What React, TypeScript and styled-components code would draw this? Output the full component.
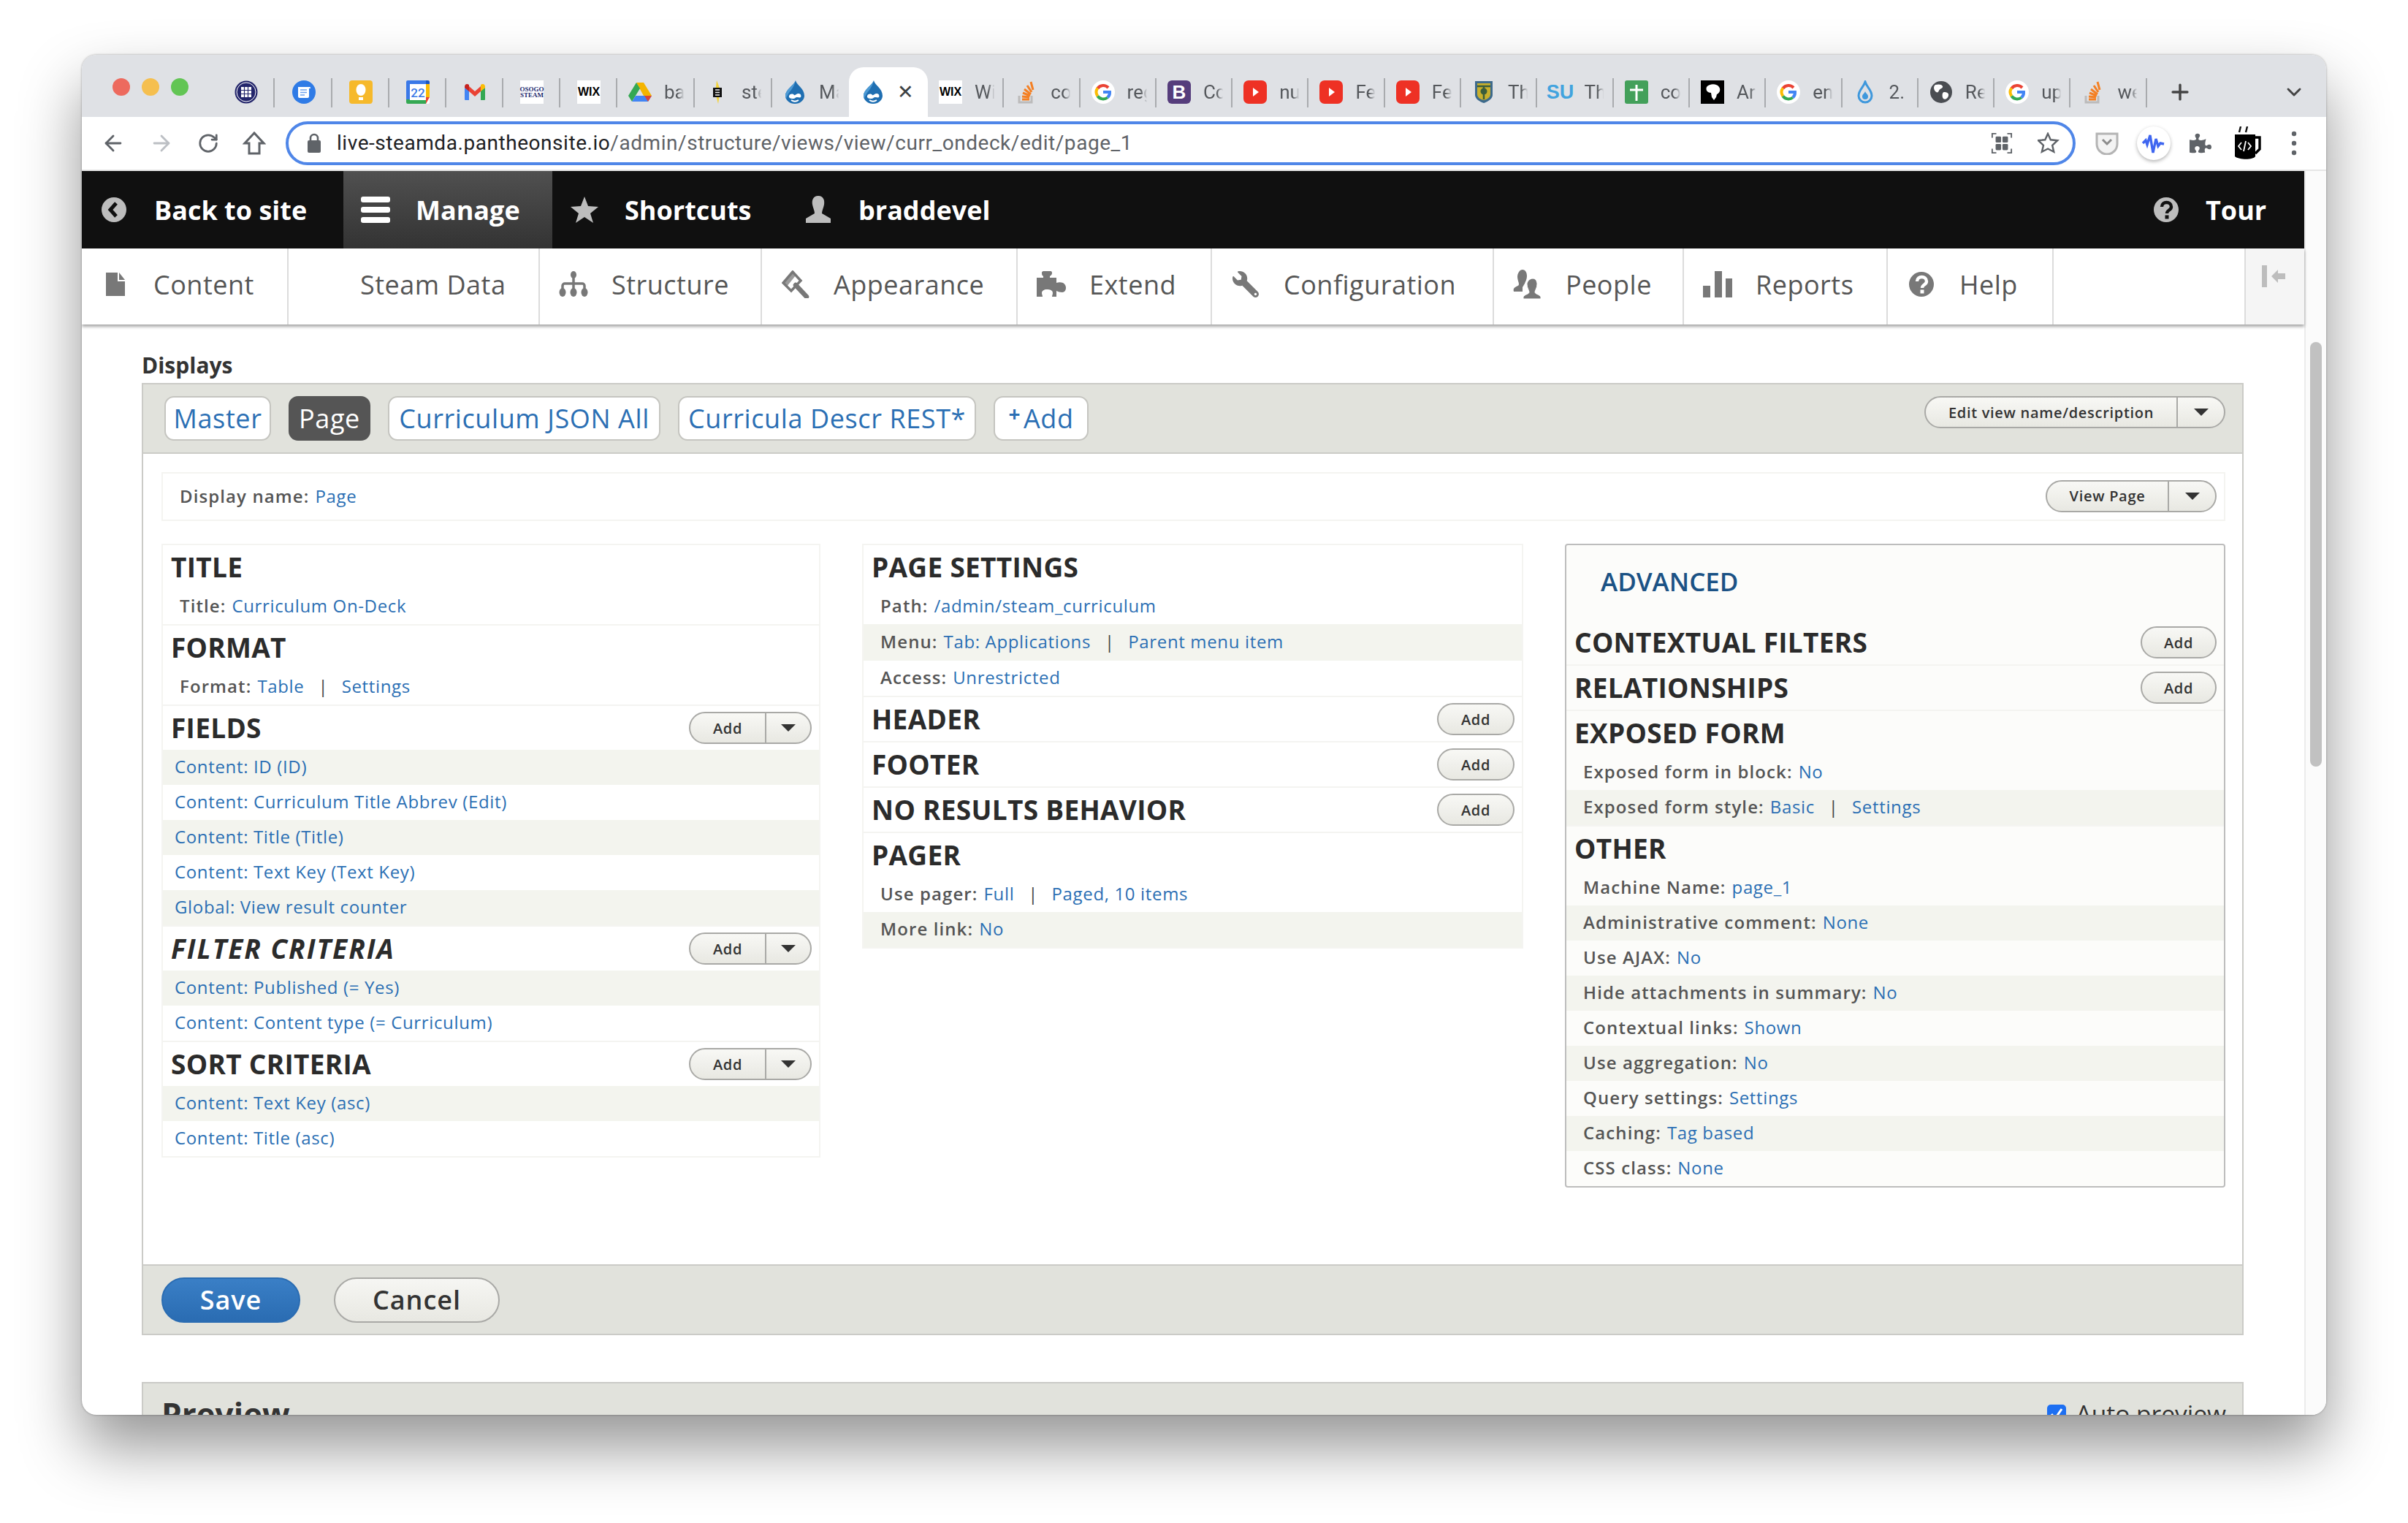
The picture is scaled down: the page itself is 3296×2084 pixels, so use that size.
import React from 'react';
import styled, { createGlobalStyle } from 'styled-components';
import { ArrowLeft, ArrowRight, RotateCw, Plus, ChevronDown } from 'lucide-react';
import { FaPuzzlePiece, FaWrench } from 'react-icons/fa';

const UI = `"Open Sans", "Noto Sans", sans-serif`;

const Global = createGlobalStyle`
  html, body { margin: 0; padding: 0; background: #fff; }
  * { box-sizing: border-box; }
`;

const Stage = styled.div`
  width: 3296px; height: 2084px; padding: 75px 0 0 112px; overflow: hidden; background: #fff;
`;
const Win = styled.div`
  width: 3072px; height: 1861px; border-radius: 20px; overflow: hidden; background: #fff;
  display: flex; flex-direction: column; box-shadow: 0 44px 84px rgba(0,0,0,.42), 0 0 3px rgba(0,0,0,.35);
  font-family: ${UI};
`;
const Strip = styled.div`
  height: 85px; flex: none; background: #dfe1e5; display: flex; align-items: flex-end; position: relative;
`;
const Lights = styled.div`
  width: 186px; height: 85px; flex: none; padding: 32px 0 0 42px; display: flex; gap: 16px; align-items: flex-start;
`;
const Light = styled.span<{ $c: string }>`
  width: 24px; height: 24px; border-radius: 50%; background: ${p => p.$c};
`;
const Tab = styled.div<{ $w: number; $active?: boolean; $pinned?: boolean; $nosep?: boolean }>`
  width: ${p => p.$w}px; height: 68px; flex: none; display: flex; align-items: center; position: relative;
  justify-content: ${p => (p.$pinned ? 'center' : 'flex-start')};
  padding-left: ${p => (p.$pinned ? 0 : p.$active ? 17 : 15)}px; gap: 17px;
  background: ${p => (p.$active ? '#fff' : 'transparent')};
  border-radius: ${p => (p.$active ? '20px 20px 0 0' : '0')};
  &::after {
    content: ''; position: absolute; right: 0; top: 15px; height: 40px; width: 2px;
    background: ${p => (p.$active || p.$nosep ? 'transparent' : '#a9abae')};
  }
`;
const TabText = styled.span`
  font-family: Roboto, sans-serif; font-size: 26px; color: #55585c; width: 38px; white-space: nowrap;
  -webkit-mask-image: linear-gradient(90deg, #000 48%, transparent 72%);
`;
const CloseX = styled.span`
  font-family: Roboto, sans-serif; font-size: 27px; color: #3c4043; line-height: 1;
`;
const StripEnd = styled.div`
  flex: 1; height: 68px; display: flex; align-items: center; justify-content: space-between; padding: 0 28px 0 28px; color: #444;
`;
const Toolbar = styled.div`
  height: 74px; flex: none; background: #fff; border-bottom: 2px solid #e6e6e6; display: flex; align-items: center; padding-bottom: 1px;
`;
const ToolBtns = styled.div`
  width: 279px; flex: none; display: flex; align-items: center; padding-left: 26px; gap: 32px;
`;
const AddrBar = styled.div`
  width: 2450px; height: 60px; flex: none; border: 4px solid #4f86e8; border-radius: 30px; display: flex; align-items: center; padding: 0 18px 0 25px;
`;
const Url = styled.div`
  font-family: Roboto, sans-serif; font-size: 28px; letter-spacing: .55px; color: #202124; margin-left: 21px; flex: 1; white-space: nowrap;
  span { color: #5f6368; }
`;
const AddrIcons = styled.div`
  display: flex; align-items: center; gap: 34px;
`;
const ExtIcons = styled.div`
  flex: 1; display: flex; align-items: center; padding-left: 11px;
`;
const ExtCell = styled.div`
  width: 64px; flex: none; display: flex; align-items: center; justify-content: center;
`;
const ExtCircle = styled.div`
  width: 46px; height: 46px; border-radius: 50%; background: #fff; box-shadow: 0 2px 5px rgba(0,0,0,.3); display: flex; align-items: center; justify-content: center;
`;

const Below = styled.div`
  flex: 1; display: flex; min-height: 0;
`;
const Main = styled.div`
  width: 3042px; flex: none; display: flex; flex-direction: column; min-height: 0;
`;
const Track = styled.div`
  flex: 1; background: #fbfbfb; border-left: 2px solid #ececec; padding: 234px 5px 0 6px;
`;
const Thumb = styled.div`
  width: 16px; height: 581px; border-radius: 8px; background: #c1c1c1;
`;
const TopBar = styled.div`
  height: 106px; flex: none; background: #101010; display: flex; align-items: stretch;
`;
const TopItem = styled.div<{ $w?: number; $on?: boolean }>`
  width: ${p => (p.$w ? p.$w + 'px' : 'auto')}; flex: none; display: flex; align-items: center; padding-left: 25px; gap: 36px;
  color: #fff; font-weight: 700; font-size: 36px;
  background: ${p => (p.$on ? 'linear-gradient(#505050, #333)' : 'transparent')};
`;
const TourItem = styled(TopItem)`
  padding-left: 0; gap: 36px;
`;
const TopGap = styled.div`
  flex: 1;
`;
const IconBox = styled.span<{ $w?: number }>`
  width: ${p => p.$w ?? 38}px; flex: none; display: flex; align-items: center; justify-content: center;
`;
const Nav = styled.div`
  height: 104px; flex: none; display: flex; background: #fff; position: relative; z-index: 2;
  box-shadow: 0 3px 4px rgba(0,0,0,.35);
`;
const NavItem = styled.div<{ $w: number }>`
  width: ${p => p.$w}px; flex: none; display: flex; align-items: center; padding: 0 0 6px 27px; gap: 33px;
  border-right: 2px solid #dcdcdc; color: #565656; font-size: 36px; letter-spacing: .5px; white-space: nowrap;
`;
const NavFill = styled.div`
  flex: 1; border-right: 2px solid #dcdcdc;
`;
const NavToggle = styled.div`
  width: 80px; flex: none; background: #f5f5f5; padding: 23px 0 0 22px;
`;
const Content = styled.div`
  flex: 1; min-height: 0; overflow: hidden; padding: 0 83px 0 82px;
`;
const Label = styled.div`
  height: 80px; padding-top: 36px; line-height: 40px; font-size: 30px; font-weight: 700; color: #333;
`;
const PanelHead = styled.div`
  height: 97px; background: #e1e2dc; border: 2px solid #cbcbc7; display: flex; align-items: flex-start; padding: 16px 23px 0 29px; gap: 24px;
`;
const DTab = styled.div<{ $on?: boolean; $w: number }>`
  height: 61px; width: ${p => p.$w}px; flex: none; border-radius: 13px; display: flex; align-items: center; justify-content: center;
  background: ${p => (p.$on ? '#555' : '#fff')}; color: ${p => (p.$on ? '#fff' : '#2b6fb4')};
  border: 2px solid ${p => (p.$on ? '#555' : '#c5c5c0')}; font-size: 36px; letter-spacing: .6px; white-space: nowrap;
`;
const PlusMark = styled.span`
  font-size: 28px; font-weight: 700; position: relative; top: -7px; margin-right: 4px;
`;
const Spacer = styled.div`
  flex: 1;
`;
const Btn = styled.div<{ $w: number }>`
  width: ${p => p.$w}px; height: 44px; flex: none; border-radius: 22px; border: 2px solid #a9a9a6;
  background: linear-gradient(#f8f8f5, #e8e8e2); display: flex; align-items: center; color: #333;
  font-size: 20px; font-weight: 600; letter-spacing: .7px; white-space: nowrap;
`;
const BtnLabel = styled.span`
  flex: 1; text-align: center;
`;
const BtnCaret = styled.span<{ $w: number }>`
  width: ${p => p.$w}px; align-self: stretch; flex: none; border-left: 2px solid #a9a9a6; display: flex; align-items: center; justify-content: center;
  &::after { content: ''; border-left: 10px solid transparent; border-right: 10px solid transparent; border-top: 10px solid #333; }
`;
const PanelBody = styled.div`
  height: 1109px; border: solid #cbcbc7; border-width: 0 2px; padding: 25px 23px 0 25px;
`;
const NameBox = styled.div`
  height: 67px; border: 2px solid #f4f4f1; display: flex; align-items: center; padding: 0 10px 2px 23px; font-size: 24px;
`;
const Columns = styled.div`
  margin-top: 31px; display: grid; grid-template-columns: 902px 905px 904px; column-gap: 57px; align-items: start;
`;
const Col = styled.div<{ $adv?: boolean }>`
  border: 2px solid ${p => (p.$adv ? '#bdbdbd' : '#f4f4f1')}; border-radius: ${p => (p.$adv ? '4px' : '0')};
  background: ${p => (p.$adv ? '#fcfcfa' : '#fff')};
`;
const Adv = styled.div`
  height: 103px; padding: 0 0 4px 47px; display: flex; align-items: center; font-size: 35px; font-weight: 600; color: #1b5285;
`;
const Section = styled.div<{ $last?: boolean }>`
  border-bottom: ${p => (p.$last ? '0' : '2px solid #f4f4f1')};
`;
const Head = styled.div`
  height: 60px; display: flex; align-items: center; justify-content: space-between; padding: 0 10px 0 11px;
`;
const H = styled.h3<{ $it?: boolean }>`
  margin: 0 0 2px; font-size: 37px; font-weight: 700; color: #2b2b2b;
  font-style: ${p => (p.$it ? 'italic' : 'normal')}; letter-spacing: ${p => (p.$it ? 2 : 0.3)}px;
`;
const Row = styled.div<{ $odd?: boolean; $link?: boolean; $tall?: boolean }>`
  height: ${p => (p.$tall ? 50 : 48)}px; display: flex; align-items: center; padding: 0 0 3px ${p => (p.$link ? 16 : 23)}px;
  background: ${p => (p.$odd ? '#f3f4ee' : 'transparent')}; font-size: 24px; white-space: pre;
`;
const B = styled.span`
  font-weight: 600; color: #555; margin-right: 8px; letter-spacing: 1.1px;
`;
const A = styled.span`
  color: #2b6fb4; letter-spacing: .65px;
`;
const Pipe = styled.span`
  color: #444; margin: 0 19px;
`;
const Footer = styled.div`
  height: 97px; background: #e1e2dc; border: 2px solid #cbcbc7; display: flex; align-items: center; padding: 0 0 0 25px; gap: 46px;
`;
const BigBtn = styled.div<{ $w: number; $p?: boolean }>`
  width: ${p => p.$w}px; height: 62px; border-radius: 31px; display: flex; align-items: center; justify-content: center;
  font-size: 36px; font-weight: 600; letter-spacing: 1px;
  color: ${p => (p.$p ? '#fff' : '#333')};
  background: ${p => (p.$p ? 'linear-gradient(#3a7fc6, #2a6cb2)' : 'linear-gradient(#f6f6f3, #e8e8e2)')};
  border: 2px solid ${p => (p.$p ? '#2a6cb2' : '#a9a9a6')};
`;
const Preview = styled.div`
  margin-top: 64px; height: 120px; background: #e1e2dc; border: 2px solid #cbcbc7; display: flex; justify-content: space-between; padding: 12px 22px 0 25px;
`;
const PTitle = styled.div`
  font-size: 44px; font-weight: 700; color: #333; line-height: 60px;
`;
const PAuto = styled.div`
  display: flex; gap: 14px; font-size: 33.5px; color: #333; line-height: 58px; align-items: flex-start;
`;
const Check = styled.span`
  width: 26px; height: 26px; margin-top: 17px; border-radius: 5px; background: #1d6ff2; color: #fff; display: flex; align-items: center; justify-content: center;
`;

/* favicons */
const Tile = styled.span<{ $bg: string; $c?: string; $fs?: number; $r?: number; $b?: boolean }>`
  width: 32px; height: 32px; flex: none; background: ${p => p.$bg}; color: ${p => p.$c ?? '#000'}; font-size: ${p => p.$fs ?? 14}px;
  border-radius: ${p => p.$r ?? 0}px; font-weight: ${p => (p.$b ? 700 : 400)};
  display: flex; align-items: center; justify-content: center; font-family: "Liberation Sans", sans-serif; line-height: 1;
`;
const Steam = styled(Tile)`
  flex-direction: column; font-family: "Liberation Serif", serif; font-weight: 700; line-height: .9;
`;
const S = (p: React.PropsWithChildren<{ w?: number; h?: number; v?: string; fill?: string }>) => (
  <svg width={p.w ?? 32} height={p.h ?? 32} viewBox={p.v ?? '0 0 32 32'} fill={p.fill ?? 'none'} style={{ flex: 'none', display: 'block' }}>{p.children}</svg>
);
const Drop = () => (
  <S>
    <path d="M17 0c1 6 12 11 12 21a13 11 0 0 1-26 0C3 12 15 7 17 0z" fill="#1f6fb2" />
    <path d="M17 0C15 7 3 12 3 21c0 2 .5 3 1 4 3-10 10-12 13-25z" fill="#4d9ad4" />
    <path d="M8 21c2-3 5-3 7-1 2 1 3-2 6-2 3 0 4 3 3 5-1 1-3 0-5 0s-3 2-5 2-7 0-6-4z" fill="#fff" />
    <path d="M11 27c3 2 7 2 10 0" stroke="#fff" strokeWidth="2" />
  </S>
);
const GG = () => (
  <S>
    <circle cx="16" cy="16" r="16" fill="#fff" />
    <path d="M23 10a9.500 9.500 0 0 0-14.600 1" stroke="#ea4335" strokeWidth="4" />
    <path d="M8.400 10.500a9.500 9.500 0 0 0 0 11" stroke="#fbbc05" strokeWidth="4" />
    <path d="M8.400 21.500a9.500 9.500 0 0 0 13.500 2" stroke="#34a853" strokeWidth="4" />
    <path d="M16 16h9a9.500 9.500 0 0 1-3 7.500" stroke="#4285f4" strokeWidth="4" />
  </S>
);
const YT = () => (
  <S><rect width="32" height="32" y="0" rx="7" fill="#ee3124" /><path d="M13 10l8 6-8 6z" fill="#fff" /></S>
);
const SO = () => (
  <S>
    <path d="M6 21v9h17v-9" stroke="#bcbbbb" strokeWidth="3" />
    <path d="M10 26h10M10 22l10 1M11 17l10 4M13 12l9 7M17 7l6 9M22 2l3 11" stroke="#f48024" strokeWidth="3" />
  </S>
);
const fav: Record<string, React.ReactNode> = {
  grid: (
    <S>
      <circle cx="16" cy="16" r="15.500" fill="#23256b" />
      <circle cx="16" cy="16" r="13" fill="none" stroke="#fff" strokeWidth="1" />
      <path d="M9 9h14v14H9z" fill="#fff" />
      <path d="M13.500 9v14M18.500 9v14M9 13.500h14M9 18.500h14" stroke="#23256b" strokeWidth="1.200" />
    </S>
  ),
  docs: (
    <S>
      <circle cx="16" cy="16" r="16" fill="#2f7be6" />
      <path d="M8 9h16c1 0 1 1 1 2h-2v11a2 2 0 0 1-2 2H10a2 2 0 0 1-2-2z" fill="#fff" />
      <path d="M11 13h9M11 16.500h9M11 20h6" stroke="#6ea2ee" strokeWidth="1.700" />
    </S>
  ),
  keep: (
    <S>
      <rect width="32" height="32" rx="4" fill="#f6b92b" />
      <ellipse cx="16" cy="13" rx="6.500" ry="8" fill="#fff" />
      <rect x="13" y="23" width="6" height="4" fill="#fff" />
    </S>
  ),
  cal: (
    <S>
      <rect width="32" height="32" rx="2" fill="#fff" />
      <path d="M0 2a2 2 0 0 1 2-2h25v5H5v21H0z" fill="#3a78e7" />
      <path d="M27 0h3a2 2 0 0 1 2 2v3h-5z" fill="#1a56c4" />
      <path d="M27 5h5v18h-5z" fill="#fbbc05" />
      <path d="M5 27h22v5H2a2 2 0 0 1-2-2v-4h5z" fill="#34a853" />
      <path d="M27 23h5l-5 9z" fill="#ea4335" />
      <text x="16" y="23" textAnchor="middle" fontSize="17" fontFamily="Roboto" fill="#3a78e7" fontWeight="500">22</text>
    </S>
  ),
  gmail: (
    <S>
      <path d="M2 10v16a1 1 0 0 0 1 1h5V14z" fill="#4285f4" />
      <path d="M24 14v13h5a1 1 0 0 0 1-1V10z" fill="#34a853" />
      <path d="M8 8l8 7 8-7v7l-8 7-8-7z" fill="#ea4335" />
      <path d="M2 9c0-4 3-5 6-3v9l-6-5z" fill="#c5221f" />
      <path d="M24 6c3-2 6-1 6 3v1l-6 5z" fill="#fbbc05" />
    </S>
  ),
  steam: (
    <Steam $bg="#fff" $c="#1c2a6e" $fs={9}>
      <span>OSOGO</span>
      <span>STEAM</span>
    </Steam>
  ),
  wix: <Tile $bg="#fff" $fs={16} $b>WIX</Tile>,
  drive: (
    <S>
      <path d="M11 3h10l11 18H21z" fill="#f4b400" />
      <path d="M11 3L0 21l5 8L16 11z" fill="#34a853" />
      <path d="M5 29h22l5-8H10z" fill="#4285f4" />
      <path d="M27 29l5-8H22z" fill="#db4437" />
    </S>
  ),
  bolt: (
    <S>
      <path d="M15 0l5 13-3 19-4-15z" fill="#f3d33a" />
      <rect x="10" y="10" width="12" height="13" fill="#111" />
      <path d="M13 13h6M13 16.500h6M13 20h6" stroke="#eee" strokeWidth="1.400" />
    </S>
  ),
  drop: <Drop />,
  so: <SO />,
  g: <GG />,
  bs: <Tile $bg="#563d7c" $c="#fff" $fs={26} $r={6} $b>B</Tile>,
  yt: <YT />,
  shield: (
    <S>
      <path d="M4 1h24v19c0 5-6 9-12 11C10 29 4 25 4 20z" fill="#3d6a8c" />
      <path d="M7 4h18v15c0 4-4 7-9 8-5-1-9-4-9-8z" fill="#c9b02c" />
      <path d="M7 8h18M16 8v18" stroke="#3b5d3b" strokeWidth="2.500" />
      <circle cx="16" cy="15" r="4.500" fill="#3b5d3b" />
    </S>
  ),
  su: <Tile $bg="transparent" $c="#42a3de" $fs={27} $b>SU</Tile>,
  cross: (
    <S>
      <rect width="32" height="32" rx="3" fill="#43a05a" />
      <path d="M16 6v22M7 13h18" stroke="#fff" strokeWidth="3" />
    </S>
  ),
  blob: (
    <S>
      <rect width="32" height="32" fill="#000" />
      <path d="M8 9c4-5 14-5 17 0 3 4 0 9-3 10l-1 4-3 4-3-4-1-6c-4 0-8-3-6-8z" fill="#fff" />
    </S>
  ),
  outline: (
    <S>
      <path d="M16 2c2 7 9 11 9 19a9 9 0 0 1-18 0C7 13 14 9 16 2z" stroke="#3f98dc" strokeWidth="3" />
      <path d="M16 15c1 3 4 4 4 7a4 4 0 0 1-8 0c0-3 3-4 4-7z" fill="#3f98dc" />
    </S>
  ),
  globe: (
    <S>
      <circle cx="16" cy="16" r="15" fill="#4a4d52" />
      <path d="M8 6c4-1 9-1 10 2s-4 3-5 6-3 3-5 1-3-7 0-9zM20 16c3 0 7 1 6 5s-5 6-7 4-2-9 1-9z" fill="#fff" />
    </S>
  ),
};

type T = { f: string; t?: string; w: number };
const PIN = 78;
const R = 104.3;
const tabs: T[] = [
  { f: 'grid', w: PIN }, { f: 'docs', w: PIN + 1 }, { f: 'keep', w: PIN }, { f: 'cal', w: PIN }, { f: 'gmail', w: PIN },
  { f: 'steam', w: PIN }, { f: 'wix', w: PIN }, { f: 'drive', t: 'ba', w: 106 }, { f: 'bolt', t: 'ste', w: 106 },
  { f: 'drop', t: 'Ma', w: 105 },
];
const tabs2: T[] = [
  { f: 'wix', t: 'Wi', w: R }, { f: 'so', t: 'co', w: R }, { f: 'g', t: 'reg', w: R }, { f: 'bs', t: 'Cc', w: R },
  { f: 'yt', t: 'nu', w: R }, { f: 'yt', t: 'Fe', w: R }, { f: 'yt', t: 'Fe', w: R }, { f: 'shield', t: 'Th', w: R },
  { f: 'su', t: 'Th', w: R }, { f: 'cross', t: 'co', w: R }, { f: 'blob', t: 'Ar', w: R }, { f: 'g', t: 'en', w: R },
  { f: 'outline', t: '2.', w: R }, { f: 'globe', t: 'Re', w: R }, { f: 'g', t: 'up', w: R }, { f: 'so', t: 'we', w: R },
];

const Dark = '#787878';
const Light2 = '#bdbdbd';
const Circle = ({ c, glyph }: { c: string; glyph: 'back' | 'q' }) => (
  <S w={36} h={36} v="0 0 36 36">
    <circle cx="18" cy="18" r="17" fill={c} />
    {glyph === 'back' ? (
      <path d="M21 9l-8 9 8 9" stroke="#101010" strokeWidth="5" fill="none" />
    ) : (
      <>
        <path d="M12 14c0-8 13-8 13 0 0 5-6 4-6 9" stroke={c === Dark ? '#fff' : '#111'} strokeWidth="4.400" fill="none" />
        <rect x="16.500" y="25.500" width="5" height="5" fill={c === Dark ? '#fff' : '#111'} />
      </>
    )}
  </S>
);
const icons: Record<string, React.ReactNode> = {
  content: <S w={26} h={32} v="0 0 26 32"><path d="M0 0h16v12h10v20H0zM18 0l8 10h-8z" fill={Dark} /></S>,
  tree: (
    <S w={40} h={36} v="0 0 40 36">
      <ellipse cx="20" cy="5" rx="4" ry="5" fill={Dark} />
      <path d="M20 5v20M5 25v-5a3 3 0 0 1 3-3h24a3 3 0 0 1 3 3v5" stroke={Dark} strokeWidth="3.500" />
      <ellipse cx="5" cy="29" rx="4.500" ry="6" fill={Dark} />
      <ellipse cx="20" cy="29" rx="4.500" ry="6" fill={Dark} />
      <ellipse cx="35" cy="29" rx="4.500" ry="6" fill={Dark} />
    </S>
  ),
  hammer: (
    <S w={38} h={38} v="0 0 38 38">
      <path d="M15 2L2 17l11 11 13-14z" fill="#fff" stroke={Dark} strokeWidth="3.500" />
      <path d="M15 2L2 17l5 5L19 7z" fill={Dark} opacity=".75" />
      <path d="M19 20l15 16" stroke={Dark} strokeWidth="6.500" strokeLinecap="round" />
    </S>
  ),
  puzzle: (
    <S w={40} h={36} v="0 0 40 36">
      <path d="M0 9H9V7C7 6 7 4 7 2 7 1 8 0 9 0H19C21 0 21 2 21 3 21 5 19 6 18 7V9H27V16C30 15 33 15 36 16 39 18 40 20 40 23 40 26 38 29 35 29 32 29 29 28 27 27V35H21C21 33 22 32 22 30 22 26 18 25 14 25 10 25 7 27 7 30 7 32 8 33 8 35H0Z" fill={Dark} />
    </S>
  ),
  wrench: <FaWrench size={36} color={Dark} style={{ transform: 'scaleX(-1)' }} />,
  people: (
    <S w={40} h={40} v="0 0 40 40">
      <path d="M13 0c4 0 6 4 6 9 0 4-2 7-3 10l-3 5v6H1c-1-3 0-5 2-6 3-2 5-2 5-4 0-3-2-6-2-10 0-5 3-10 7-10z" fill={Dark} />
      <path d="M27 12c4 0 6 4 6 8 0 5-3 8-3 11 0 2 6 3 8 6v3H14v-3c2-3 8-4 8-6 0-3-3-6-3-11 0-4 4-8 8-8z" fill={Dark} stroke="#fff" strokeWidth="1" />
    </S>
  ),
  bars: <S w={40} h={36} v="0 0 40 36"><path d="M0 20h10v16H0zM16 0h10v36H16zM31 10h9v26h-9z" fill={Dark} /></S>,
  help: <Circle c={Dark} glyph="q" />,
};

const nav: { t: string; i?: string; w: number }[] = [
  { t: 'Content', i: 'content', w: 283 }, { t: 'Steam Data', w: 344 }, { t: 'Structure', i: 'tree', w: 304 },
  { t: 'Appearance', i: 'hammer', w: 350 }, { t: 'Extend', i: 'puzzle', w: 266 }, { t: 'Configuration', i: 'wrench', w: 386 },
  { t: 'People', i: 'people', w: 260 }, { t: 'Reports', i: 'bars', w: 279 }, { t: 'Help', i: 'help', w: 227 },
];

type Item = { l?: string; v?: string; v2?: string; link?: string };
const AddOnly = ({ w = 106 }: { w?: number }) => <Btn $w={w}><BtnLabel>Add</BtnLabel></Btn>;
const AddDrop = () => <Btn $w={168}><BtnLabel>Add</BtnLabel><BtnCaret $w={62} /></Btn>;

const Rows = ({ items, first = false, tallAt }: { items: Item[]; first?: boolean; tallAt?: number }) => (
  <>
    {items.map((it, i) => (
      <Row key={i} $odd={first ? i % 2 === 0 : i % 2 === 1} $link={!!it.link} $tall={tallAt === i}>
        {it.link ? <A>{it.link}</A> : (
          <>
            <B>{it.l}:</B><A>{it.v}</A>
            {it.v2 && <><Pipe>|</Pipe><A>{it.v2}</A></>}
          </>
        )}
      </Row>
    ))}
  </>
);

export default function App() {
  return (
    <Stage>
      <Global />
      <Win>
        <Strip>
          <Lights>
            <Light $c="#ed6a5e" /><Light $c="#f5bf4f" /><Light $c="#62c554" />
          </Lights>
          {tabs.map((t, i) => (
            <Tab key={i} $w={t.w} $pinned={!t.t} $nosep={i === tabs.length - 1}>
              {fav[t.f]}
              {t.t && <TabText>{t.t}</TabText>}
            </Tab>
          ))}
          <Tab $w={108} $active>
            {fav.drop}
            <CloseX>✕</CloseX>
          </Tab>
          {tabs2.map((t, i) => (
            <Tab key={i} $w={t.w}>
              {fav[t.f]}
              <TabText>{t.t}</TabText>
            </Tab>
          ))}
          <StripEnd>
            <Plus size={34} strokeWidth={2.4} />
            <ChevronDown size={32} strokeWidth={2.2} />
          </StripEnd>
        </Strip>
        <Toolbar>
          <ToolBtns>
            <ArrowLeft size={34} color="#5f6368" strokeWidth={2} />
            <ArrowRight size={34} color="#bcbfc4" strokeWidth={2} />
            <RotateCw size={30} color="#5f6368" strokeWidth={2.2} />
            <S w={32} h={34} v="0 0 32 34"><path d="M16 3L3 17h6v14h14V17h6z" fill="none" stroke="#5f6368" strokeWidth="3" /></S>
          </ToolBtns>
          <AddrBar>
            <S w={20} h={30} v="0 0 20 30"><path d="M5 12V8a5 5 0 0 1 10 0v4" stroke="#5f6368" strokeWidth="2.600" /><rect x="1" y="11" width="18" height="17" rx="2" fill="#5f6368" /></S>
            <Url>live-steamda.pantheonsite.io<span>/admin/structure/views/view/curr_ondeck/edit/page_1</span></Url>
            <AddrIcons>
              <S w={30} h={30}>
                <path d="M2 8V2h6M24 2h6v6M30 24v6h-6M8 30H2v-6" stroke="#5f6368" strokeWidth="2" />
                <rect x="7" y="6" width="8" height="9" rx="1.500" fill="#5f6368" /><rect x="17" y="6" width="8" height="9" rx="1.500" fill="#5f6368" />
                <rect x="7" y="17" width="8" height="9" rx="1.500" fill="#5f6368" /><rect x="17" y="17" width="8" height="9" rx="1.500" fill="#5f6368" />
              </S>
              <S w={30} h={30}><path d="M15 2l4 9 10 1-7.500 7 2.200 9.500L15 24l-8.700 4.500L8.500 19 1 12l10-1z" stroke="#5f6368" strokeWidth="2.600" /></S>
            </AddrIcons>
          </AddrBar>
          <ExtIcons>
            <ExtCell><S w={32} h={32}><path d="M2 3h28v14a14 14 0 0 1-28 0z" fill="#f3f3f3" stroke="#b4b4b4" strokeWidth="3" /><path d="M10 11l6 6 6-6" stroke="#8c8c8c" strokeWidth="3" /></S></ExtCell>
            <ExtCell>
              <ExtCircle>
                <S w={34} h={30} v="0 0 34 30"><path d="M2 15l4-4 2 6 4-13 4 24 4-19 3 10 3-4 5 1" stroke="#3f66f0" strokeWidth="3.400" /></S>
              </ExtCircle>
            </ExtCell>
            <ExtCell><FaPuzzlePiece size={30} color="#5f6368" /></ExtCell>
            <ExtCell>
              <S w={38} h={46} v="0 0 38 46">
                <path d="M10 0l-2 8M19 0l-2 8" stroke="#111" strokeWidth="2.400" />
                <path d="M2 11h28v30c-3 5-22 5-28 0z" fill="#000" />
                <path d="M30 15h6v16l-6 6" stroke="#000" strokeWidth="3.400" />
                <path d="M11 22l-4 5 4 5M20 22l4 5-4 5M17 20l-3 14" stroke="#fff" strokeWidth="1.800" />
              </S>
            </ExtCell>
            <ExtCell>
              <S w={10} h={34} v="0 0 10 34"><circle cx="5" cy="4" r="3.200" fill="#5f6368" /><circle cx="5" cy="17" r="3.200" fill="#5f6368" /><circle cx="5" cy="30" r="3.200" fill="#5f6368" /></S>
            </ExtCell>
          </ExtIcons>
        </Toolbar>
        <Below>
          <Main>
            <TopBar>
              <TopItem $w={358}>
                <IconBox><Circle c={Light2} glyph="back" /></IconBox>
                <span>Back to site</span>
              </TopItem>
              <TopItem $w={286} $on>
                <IconBox>
                  <S w={40} h={36} v="0 0 40 36"><rect width="40" height="8" y="0" rx="3" fill="#fff" /><rect width="40" height="8" y="14" rx="3" fill="#fff" /><rect width="40" height="8" y="28" rx="3" fill="#fff" /></S>
                </IconBox>
                <span>Manage</span>
              </TopItem>
              <TopItem $w={320}>
                <IconBox>
                  <S w={38} h={36} v="0 0 38 36"><path d="M19 0l5 13 14 1-11 9 4 13-12-8-12 8 4-13L0 14l14-1z" fill={Light2} /></S>
                </IconBox>
                <span>Shortcuts</span>
              </TopItem>
              <TopItem>
                <IconBox>
                  <S w={38} h={38} v="0 0 38 38"><path d="M19 0c7 0 9 6 8 12-1 5-3 8-3 12l12 7v6H2v-6l12-7c0-4-2-7-3-12-1-6 1-12 8-12z" fill={Light2} /></S>
                </IconBox>
                <span>braddevel</span>
              </TopItem>
              <TopGap />
              <TourItem $w={207}>
                <IconBox $w={36}><Circle c={Light2} glyph="q" /></IconBox>
                <span>Tour</span>
              </TourItem>
            </TopBar>
            <Nav>
              {nav.map(n => (
                <NavItem key={n.t} $w={n.w}>
                  <IconBox>{n.i && icons[n.i]}</IconBox>
                  <span>{n.t}</span>
                </NavItem>
              ))}
              <NavFill />
              <NavToggle>
                <S w={38} h={30} v="0 0 38 30"><rect x="0" y="0" width="7" height="30" fill="#bdbdbd" /><path d="M13 15l9-9v5h10v8H22v5z" fill="#bdbdbd" /></S>
              </NavToggle>
            </Nav>
            <Content>
              <Label>Displays</Label>
              <PanelHead>
                <DTab $w={146}><A>Master</A></DTab>
                <DTab $w={112} $on>Page</DTab>
                <DTab $w={373}>Curriculum JSON All</DTab>
                <DTab $w={408}>Curricula Descr REST*</DTab>
                <DTab $w={130}><PlusMark>+</PlusMark>Add</DTab>
                <Spacer />
                <Btn $w={412}><BtnLabel>Edit view name/description</BtnLabel><BtnCaret $w={65} /></Btn>
              </PanelHead>
              <PanelBody>
                <NameBox>
                  <B>Display name:</B><A>Page</A>
                  <Spacer />
                  <Btn $w={234}><BtnLabel>View Page</BtnLabel><BtnCaret $w={65} /></Btn>
                </NameBox>
                <Columns>
                  <Col>
                    <Section>
                      <Head><H>TITLE</H></Head>
                      <Rows items={[{ l: 'Title', v: 'Curriculum On-Deck' }]} />
                    </Section>
                    <Section>
                      <Head><H>FORMAT</H></Head>
                      <Rows items={[{ l: 'Format', v: 'Table', v2: 'Settings' }]} />
                    </Section>
                    <Section>
                      <Head><H>FIELDS</H><AddDrop /></Head>
                      <Rows first items={[
                        { link: 'Content: ID (ID)' }, { link: 'Content: Curriculum Title Abbrev (Edit)' }, { link: 'Content: Title (Title)' },
                        { link: 'Content: Text Key (Text Key)' }, { link: 'Global: View result counter' },
                      ]} />
                    </Section>
                    <Section>
                      <Head><H $it>FILTER CRITERIA</H><AddDrop /></Head>
                      <Rows first items={[{ link: 'Content: Published (= Yes)' }, { link: 'Content: Content type (= Curriculum)' }]} />
                    </Section>
                    <Section $last>
                      <Head><H>SORT CRITERIA</H><AddDrop /></Head>
                      <Rows first items={[{ link: 'Content: Text Key (asc)' }, { link: 'Content: Title (asc)' }]} />
                    </Section>
                  </Col>
                  <Col>
                    <Section>
                      <Head><H>PAGE SETTINGS</H></Head>
                      <Rows tallAt={1} items={[
                        { l: 'Path', v: '/admin/steam_curriculum' },
                        { l: 'Menu', v: 'Tab: Applications', v2: 'Parent menu item' },
                        { l: 'Access', v: 'Unrestricted' },
                      ]} />
                    </Section>
                    <Section><Head><H>HEADER</H><AddOnly /></Head></Section>
                    <Section><Head><H>FOOTER</H><AddOnly /></Head></Section>
                    <Section><Head><H>NO RESULTS BEHAVIOR</H><AddOnly /></Head></Section>
                    <Section $last>
                      <Head><H>PAGER</H></Head>
                      <Rows items={[{ l: 'Use pager', v: 'Full', v2: 'Paged, 10 items' }, { l: 'More link', v: 'No' }]} />
                    </Section>
                  </Col>
                  <Col $adv>
                    <Adv>ADVANCED</Adv>
                    <Section><Head><H>CONTEXTUAL FILTERS</H><AddOnly w={104} /></Head></Section>
                    <Section><Head><H>RELATIONSHIPS</H><AddOnly w={104} /></Head></Section>
                    <Section>
                      <Head><H>EXPOSED FORM</H></Head>
                      <Rows items={[{ l: 'Exposed form in block', v: 'No' }, { l: 'Exposed form style', v: 'Basic', v2: 'Settings' }]} />
                    </Section>
                    <Section $last>
                      <Head><H>OTHER</H></Head>
                      <Rows items={[
                        { l: 'Machine Name', v: 'page_1' }, { l: 'Administrative comment', v: 'None' }, { l: 'Use AJAX', v: 'No' },
                        { l: 'Hide attachments in summary', v: 'No' }, { l: 'Contextual links', v: 'Shown' }, { l: 'Use aggregation', v: 'No' },
                        { l: 'Query settings', v: 'Settings' }, { l: 'Caching', v: 'Tag based' }, { l: 'CSS class', v: 'None' },
                      ]} />
                    </Section>
                  </Col>
                </Columns>
              </PanelBody>
              <Footer>
                <BigBtn $w={190} $p>Save</BigBtn>
                <BigBtn $w={227}>Cancel</BigBtn>
              </Footer>
              <Preview>
                <PTitle>Preview</PTitle>
                <PAuto>
                  <Check><S w={20} h={20} v="0 0 20 20"><path d="M3 10l5 6 9-13" stroke="#fff" strokeWidth="3" /></S></Check>
                  <span>Auto preview</span>
                </PAuto>
              </Preview>
            </Content>
          </Main>
          <Track><Thumb /></Track>
        </Below>
      </Win>
    </Stage>
  );
}
